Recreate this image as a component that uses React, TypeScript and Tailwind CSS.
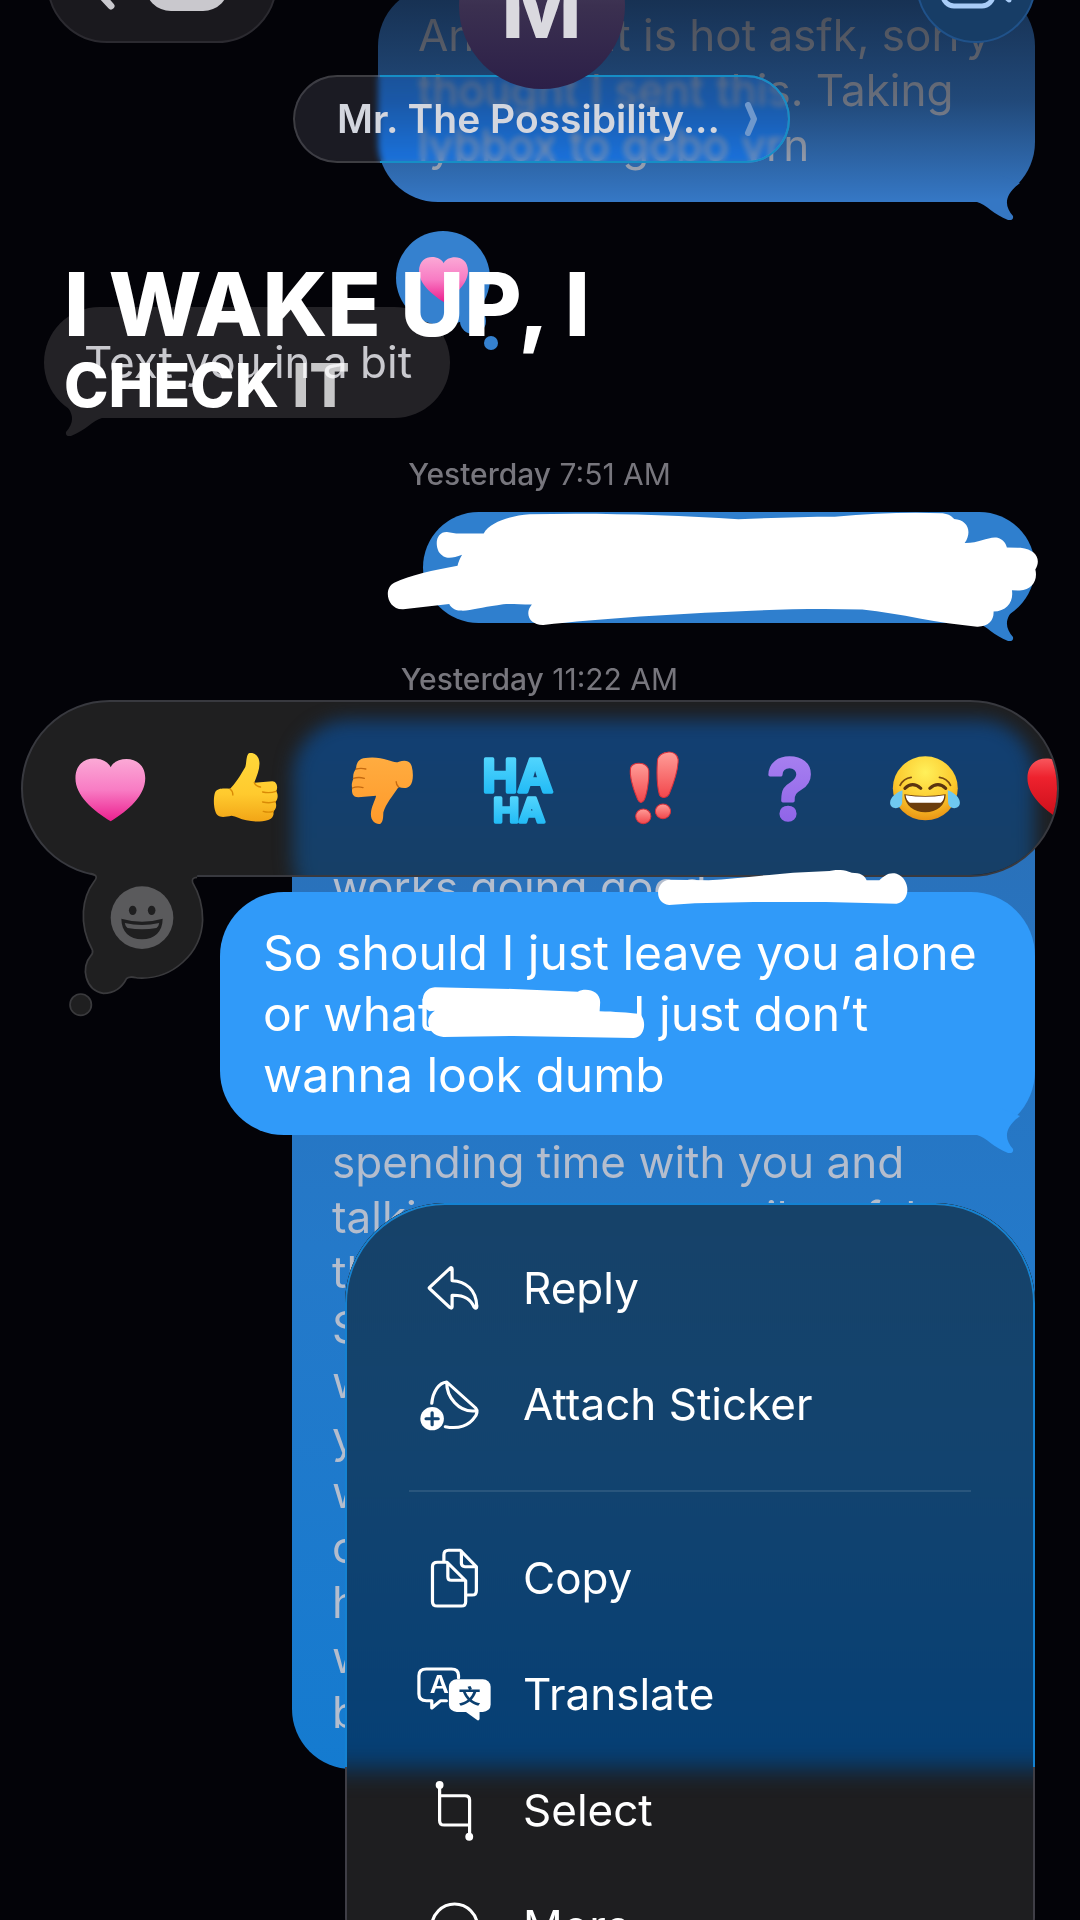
import React from 'react';

type Reaction = {
  label: string;
  viewBox: string;
  art: React.ReactNode;
};

type MenuItem = {
  label: string;
  viewBox: string;
  icon: React.ReactNode;
};

const HeartShape = ({ fill }: { fill: string }) => (
  <path
    d="M321 235 C308 200 219 190 219 268 C219 320 270 365 321 397 C372 365 421 320 421 268 C421 195 335 200 321 235 Z"
    fill={fill}
  />
);

const REACTIONS: Reaction[] = [
  {
    label: 'Heart',
    viewBox: '209 186 220 228',
    art: <HeartShape fill="url(#pink)" />,
  },
  {
    label: 'Thumbs up',
    viewBox: '604 180 220 228',
    art: (
      <>
        <path
          d="M722 187 C735 183 752 192 753 215 C754 235 745 255 738 275 L790 271 C803 271 808 290 801 301 C808 310 807 326 799 332 C804 342 801 357 793 361 C796 372 790 384 778 387 C758 393 735 393 715 388 C697 384 685 376 672 374 C655 378 640 380 632 373 C620 362 618 320 625 303 C632 290 650 292 668 293 C682 280 700 250 712 228 C716 215 714 195 722 187 Z"
          fill="url(#yellow)"
        />
        <path
          d="M738 275 Q742 285 756 288 M762 303 Q782 308 801 301 M762 333 Q782 338 799 332 M764 361 Q780 366 793 361 M668 294 Q676 300 676 312"
          fill="none"
          stroke="#d98a06"
          strokeWidth="4"
          strokeLinecap="round"
        />
      </>
    ),
  },
  {
    label: 'Thumbs down',
    viewBox: '999 186 220 228',
    art: (
      <>
        <path
          d="M1055 208 C1085 203 1105 207 1125 213 C1140 218 1150 222 1158 218 C1175 212 1190 214 1195 232 C1201 255 1199 280 1190 290 C1182 300 1168 297 1157 294 C1140 320 1120 345 1113 370 C1112 385 1113 400 1103 405 C1090 407 1075 395 1077 372 C1078 352 1088 338 1092 320 L1040 325 C1025 325 1020 312 1023 298 C1020 288 1022 280 1026 270 C1024 258 1028 246 1034 240 C1034 222 1042 211 1055 208Z"
          fill="url(#orange)"
        />
        <path
          d="M1034 240 Q1048 236 1062 240 M1026 268 Q1042 263 1058 268 M1023 297 Q1038 291 1054 296 M1157 294 Q1150 286 1150 278"
          fill="none"
          stroke="#c56a10"
          strokeWidth="4"
          strokeLinecap="round"
        />
      </>
    ),
  },
  {
    label: 'Haha',
    viewBox: '1391 186 220 228',
    art: (
      <g
        fill="url(#cyan)"
        stroke="url(#cyan)"
        strokeWidth="10"
        strokeLinejoin="round"
        textAnchor="middle"
        className="font-['Inter',sans-serif] font-bold"
      >
        <text x="1500" y="308" fontSize="136">HA</text>
        <text x="1504" y="400" fontSize="100">HA</text>
      </g>
    ),
  },
  {
    label: 'Exclamation',
    viewBox: '218 186 220 228',
    art: (
      <g fill="url(#coral)" stroke="#d8323c" strokeWidth="3">
        <path d="M260 238 C262 218 308 215 313 245 C315 280 305 320 300 332 C294 343 286 343 281 332 C272 310 256 265 260 238Z" />
        <path d="M338 215 C340 185 395 178 398 212 C398 250 380 295 372 315 C366 327 350 330 344 318 C336 290 336 245 338 215Z" />
        <circle cx="297" cy="382" r="22" />
        <circle cx="354" cy="367" r="22" />
      </g>
    ),
  },
  {
    label: 'Question',
    viewBox: '613 186 220 228',
    art: (
      <text
        x="723"
        y="390"
        fontSize="248"
        textAnchor="middle"
        fill="url(#violet)"
        stroke="url(#violet)"
        strokeWidth="10"
        strokeLinejoin="round"
        className="font-['Inter',sans-serif] font-semibold"
      >
        ?
      </text>
    ),
  },
  {
    label: 'Tears of joy',
    viewBox: '1007 186 220 228',
    art: (
      <>
        <ellipse cx="1115" cy="298" rx="94" ry="96" fill="url(#face)" />
        <path
          d="M1042 289 Q1052 268 1074 265 M1188 289 Q1178 268 1156 265"
          fill="none"
          stroke="#7a4a10"
          strokeWidth="5"
          strokeLinecap="round"
        />
        <path
          d="M1056 298 Q1078 276 1102 298 M1128 298 Q1152 276 1174 298"
          fill="none"
          stroke="#5a3410"
          strokeWidth="9"
          strokeLinecap="round"
        />
        <path d="M1054 316 Q1115 326 1174 316 C1174 350 1148 370 1115 370 C1082 370 1056 350 1054 316Z" fill="#6b3d0c" />
        <path d="M1058 319 Q1115 328 1170 319 C1170 330 1165 338 1160 341 L1070 341 C1063 336 1059 328 1058 319Z" fill="#fff" />
        <path d="M1049 304 C1030 312 1013 325 1013 342 C1014 363 1046 363 1048 340 Z" fill="#6fc8f0" />
        <path d="M1180 304 C1199 312 1215 325 1215 342 C1214 363 1182 363 1181 340 Z" fill="#6fc8f0" />
      </>
    ),
  },
  {
    label: 'Red heart',
    viewBox: '209 186 220 228',
    art: <HeartShape fill="url(#red)" />,
  },
];

const MENU_TOP: MenuItem[] = [
  {
    label: 'Reply',
    viewBox: '378 228 213 192',
    icon: (
      <path d="M476 265 L419 322 Q417 324 419 326 L476 383 C480 386 482 384 482 380 L482 346 C520 345 535 360 544 382 C547 387 552 385 551 378 C550 330 520 303 482 302 L482 268 C482 263 480 261 476 265Z" />
    ),
  },
  {
    label: 'Attach Sticker',
    viewBox: '378 576 213 192',
    icon: (
      <>
        <path d="M425 670 C428 635 445 608 467 606 L548 684 C555 692 551 705 545 712 C530 737 500 748 463 740 M467 606 C466 650 500 700 550 692" />
        <ellipse cx="426" cy="716" rx="33" ry="35" fill="currentColor" stroke="none" />
        <path d="M409 716 H443 M426 698 V734" stroke="#12426f" />
      </>
    ),
  },
];

const MENU_BOTTOM: MenuItem[] = [
  {
    label: 'Copy',
    viewBox: '378 138 213 192',
    icon: (
      <path d="M441 187 H468 L520 242 V305 Q520 318 508 318 H441 Q427 318 427 305 V200 Q427 187 441 187Z M470 190 V230 Q470 241 480 241 H518 M459 182 V165 Q459 151 472 151 H505 L550 200 V272 Q550 285 538 285 H526 M508 153 V190 Q508 200 518 200 H548" />
    ),
  },
  {
    label: 'Translate',
    viewBox: '378 489 213 192',
    icon: (
      <>
        <path d="M466 605 H450 L425 627 V605 H410 Q389 605 389 585 V530 Q389 510 410 510 H480 Q500 510 500 530 V536" />
        <rect x="473" y="541" width="117" height="98" rx="22" fill="currentColor" stroke="none" />
        <path d="M518 637 L553 664 Q559 666 559 658 V636Z" fill="currentColor" stroke="none" />
        <g stroke="none" textAnchor="middle">
          <text x="446" y="583" fontSize="74" fill="currentColor" className="font-['Inter',sans-serif] font-semibold">A</text>
          <text x="531" y="614" fontSize="62" fill="#0a3f70" className="font-['Noto_Sans_CJK_SC',sans-serif] font-bold">文</text>
        </g>
      </>
    ),
  },
  {
    label: 'Select',
    viewBox: '378 837 213 192',
    icon: (
      <>
        <path d="M447 857 V965 Q447 978 460 978 H528 M449 890 H518 Q531 890 531 903 V1010" />
        <ellipse cx="447" cy="858" rx="11" ry="12" fill="currentColor" stroke="none" />
        <ellipse cx="530" cy="1013" rx="11" ry="12" fill="currentColor" stroke="none" />
      </>
    ),
  },
  {
    label: 'More...',
    viewBox: '378 1185 213 192',
    icon: (
      <>
        <ellipse cx="489" cy="1284" rx="64" ry="69" />
        <path d="M460 1284 H461 M489 1284 H490 M518 1284 H519" strokeWidth="14" />
      </>
    ),
  },
];

// shared gradients for the reaction artwork
const Gradients = () => (
  <svg className="absolute size-0" aria-hidden="true">
    <defs>
      <linearGradient id="pink" x1="0" y1="0" x2="0" y2="1">
        <stop offset="0" stopColor="#fba9d6" />
        <stop offset="0.5" stopColor="#f87cc4" />
        <stop offset="1" stopColor="#ec1f8e" />
      </linearGradient>
      <linearGradient id="red" x1="0" y1="0" x2="0" y2="1">
        <stop offset="0" stopColor="#f8565c" />
        <stop offset="0.3" stopColor="#ee222e" />
        <stop offset="1" stopColor="#c80d18" />
      </linearGradient>
      <linearGradient id="yellow" x1="0" y1="0" x2="0" y2="1">
        <stop offset="0" stopColor="#ffd83a" />
        <stop offset="0.6" stopColor="#ffca2e" />
        <stop offset="1" stopColor="#f2a516" />
      </linearGradient>
      <linearGradient id="orange" x1="0" y1="0" x2="0" y2="1">
        <stop offset="0" stopColor="#ffac40" />
        <stop offset="1" stopColor="#ff9a2a" />
      </linearGradient>
      <linearGradient id="cyan" x1="0" y1="0" x2="0" y2="1">
        <stop offset="0" stopColor="#5fdcff" />
        <stop offset="1" stopColor="#16b4f4" />
      </linearGradient>
      <linearGradient id="coral" x1="0" y1="0" x2="0" y2="1">
        <stop offset="0" stopColor="#ff9d98" />
        <stop offset="1" stopColor="#f2474c" />
      </linearGradient>
      <linearGradient id="violet" x1="0" y1="0" x2="0" y2="1">
        <stop offset="0" stopColor="#ad86f2" />
        <stop offset="1" stopColor="#8a5ee6" />
      </linearGradient>
      <radialGradient id="face" cx="0.5" cy="0.25" r="0.8">
        <stop offset="0" stopColor="#fff05a" />
        <stop offset="0.6" stopColor="#fcc82c" />
        <stop offset="1" stopColor="#e58a10" />
      </radialGradient>
    </defs>
  </svg>
);

const Tail = ({ className }: { className: string }) => (
  <svg viewBox="0 0 50 45" className={`absolute -bottom-[18px] h-[45px] w-[50px] ${className}`} aria-hidden="true">
    <path
      d="M0 27 H7 C16 29 24 40 38 45 Q44 46 43 41 C34 31 34 20 50 8 L30 0 L0 0 Z"
      fill="currentColor"
    />
  </svg>
);

const Timestamp = ({ day, time }: { day: string; time: string }) => (
  <p className="mt-9 text-center text-[30px] leading-10 text-[#77767d]">
    <span className="font-medium">{day}</span> {time}
  </p>
);

const MenuRow = ({ item }: { item: MenuItem }) => (
  <button type="button" className="relative flex h-[116px] w-full items-center gap-[26px] px-16 text-left">
    <span className="flex w-[88px] justify-center">
      <svg
        viewBox={item.viewBox}
        preserveAspectRatio="none"
        className="h-16 w-[76px] overflow-visible"
        fill="none"
        stroke="currentColor"
        strokeWidth="9"
        strokeLinecap="round"
        strokeLinejoin="round"
        aria-hidden="true"
      >
        {item.icon}
      </svg>
    </span>
    {item.label}
  </button>
);

const Header = () => (
  <header className="absolute inset-x-0 -top-[77px] grid grid-cols-[1fr_auto_1fr] items-start pr-11 pl-[47px]">
    <button
      type="button"
      aria-label="Back"
      className="flex h-[120px] w-[230px] items-center gap-7 rounded-full border-2 border-[#2b2a30] bg-[#1a191e] pl-9 text-[#c9c8cd]"
    >
      <svg viewBox="0 0 32 54" className="h-[54px] w-8" fill="none" stroke="currentColor" strokeWidth="7" strokeLinecap="round" aria-hidden="true">
        <path d="M26 4 L5 27 L26 50" />
      </svg>
      <span className="h-14 w-[84px] rounded-[26px] bg-[#c9c8cd]" />
    </button>
    <div className="flex flex-col items-center">
      <div className="relative z-10 flex size-[166px] items-center justify-center rounded-full bg-linear-to-b from-[#57506c] via-[#3b3050] to-[#2c1f48] text-[88px] font-bold text-[#dad9df]">
        M
      </div>
      <button
        type="button"
        className="relative -mt-[14px] flex h-[88px] w-[497px] items-center justify-center gap-6 rounded-full border-2 border-white/15 bg-white/10 pl-3 text-[39px] font-semibold text-[#d3d6de] backdrop-blur-[3px] backdrop-brightness-90 backdrop-saturate-200"
      >
        <span className="absolute -inset-0.5 rounded-full border-2 border-[#168ec6] [clip-path:inset(0_0_0_87px)]" />
        Mr. The Possibility...
        <svg viewBox="0 0 14 34" className="h-[34px] w-3.5" fill="none" stroke="#6f98cc" strokeWidth="6" strokeLinecap="round" strokeLinejoin="round" aria-hidden="true">
          <path d="M4 3 L10 17 L4 31" />
        </svg>
      </button>
    </div>
    <button
      type="button"
      aria-label="Video call"
      className="flex size-[120px] items-center justify-center justify-self-end rounded-full border-2 border-[#20528a] bg-[#173d66] pt-1.5"
    >
      <svg viewBox="0 0 72 46" className="h-[46px] w-[72px]" fill="none" stroke="#a9cdf8" strokeWidth="5" strokeLinejoin="round" aria-hidden="true">
        <rect x="3" y="3" width="50" height="40" rx="11" />
        <path d="M59 18 L69 9 V37 L59 28Z" fill="#a9cdf8" />
      </svg>
    </button>
  </header>
);

const Conversation = () => (
  <main className="flex flex-col pr-[45px] pl-11">
    <div className="relative -mt-[14px] w-[657px] self-end rounded-[60px] bg-[#3577c4] px-10 pt-[22px] pb-[29px] text-[44px] leading-[55px] whitespace-nowrap text-[#acb6c8]">
      And that it is hot asfk, sorry<br />
      thought I sent this. Taking<br />
      lybbox to gobo vrn
      <Tail className="right-[15px] text-[#3577c4]" />
    </div>

    <div className="relative mt-[105px] w-[406px] self-start rounded-[56px] bg-[#232226] px-10 py-7 text-[44px] leading-[55px] whitespace-nowrap text-[#c9c9ce]">
      Text you in a bit
      <Tail className="left-[15px] -scale-x-100 text-[#232226]" />
      <svg viewBox="0 0 104 120" className="absolute -top-[76px] -right-[49px] h-[120px] w-[104px]" aria-hidden="true">
        <g fill="#3581cf">
          <ellipse cx="48" cy="47" rx="47" ry="47" />
          <circle cx="78" cy="90" r="13" />
          <circle cx="96" cy="112" r="7" />
        </g>
        <svg x="24" y="25" width="49" height="46" viewBox="219 205 202 192" preserveAspectRatio="none">
          <HeartShape fill="url(#pink)" />
        </svg>
      </svg>
    </div>

    <Timestamp day="Yesterday" time="7:51 AM" />

    <div className="relative mt-[18px] h-[111px] w-[612px] self-end rounded-[56px] bg-[#2f7fce]">
      <Tail className="right-[15px] text-[#2f7fce]" />
      <svg viewBox="55 186 1425 344" preserveAspectRatio="none" className="absolute top-0 -left-[38px] h-[115px] w-[654px]" aria-hidden="true">
        <path
          d="M95 477 C60 480 50 415 75 398 C110 375 160 360 213 347 C215 335 218 325 223 314 C200 325 185 330 172 305 C162 275 170 245 190 246 L210 250 L270 250 C285 215 330 197 370 193 C520 188 680 195 825 208 C900 203 970 200 1035 200 C1120 190 1200 185 1270 190 C1285 193 1290 200 1295 207 C1325 210 1335 245 1318 279 C1350 280 1370 258 1390 263 C1402 268 1408 280 1410 292 L1440 293 C1475 298 1485 330 1472 358 C1478 390 1465 420 1438 421 L1421 420 C1425 455 1410 482 1381 484 C1382 510 1370 530 1345 529 C1260 520 1180 490 1095 478 C1000 474 900 478 830 483 C700 490 520 505 400 524 C370 525 358 490 375 463 C340 463 320 458 300 465 C265 470 240 483 220 481 C205 480 198 470 195 461 Z"
          fill="#fff"
        />
      </svg>
    </div>

    <Timestamp day="Yesterday" time="11:22 AM" />

    <div className="mt-[25px] w-[743px] self-end rounded-[60px] bg-linear-to-b from-[#2b6fb6] via-[#2479c9] to-[#147bd0] px-10 pt-[136px] pb-[29px] text-[44px] leading-[55px] whitespace-nowrap text-[#b4bdcd]">
      works going good<br />
      <br />
      <br />
      <br />
      <br />
      spending time with you and<br />
      talking to you, your vibes felt<br />
      th<br />
      S<br />
      w<br />
      y<br />
      w<br />
      o<br />
      h<br />
      w<br />
      b
    </div>
  </main>
);

const ReactionBar = () => (
  <div className="relative mx-[21px]">
    <div className="relative flex h-[177px] items-center overflow-hidden rounded-full border-2 border-[#38393f] bg-[#1f1f20] pl-[19px]">
      <div className="absolute top-[18px] -bottom-10 left-[270px] right-[22px] rounded-[56px] bg-linear-to-b from-[#113f73] to-[#173f63] blur-[9px]" />
      {REACTIONS.map((reaction) => (
        <button key={reaction.label} type="button" aria-label={reaction.label} className="relative flex w-34 shrink-0 justify-center">
          <svg viewBox={reaction.viewBox} preserveAspectRatio="none" className="size-[76px] overflow-visible">
            {reaction.art}
          </svg>
        </button>
      ))}
    </div>
    <button type="button" aria-label="More reactions" className="absolute top-[172px] left-12">
      <svg viewBox="200 546 392 435" preserveAspectRatio="none" className="h-[145px] w-[135px]">
        <path
          d="M262 546 C282 555 283 562 272 576 C240 620 225 700 268 780 C270 787 269 792 262 799 C235 830 245 900 300 910 C335 910 355 890 367 866 C375 858 385 861 400 864 C500 870 585 790 588 690 C588 640 575 605 559 578 C556 568 560 562 572 562 L572 546 Z"
          fill="#1f1f20"
        />
        <path
          d="M262 550 C282 555 283 562 272 576 C240 620 225 700 268 780 C270 787 269 792 262 799 C235 830 245 900 300 910 C335 910 355 890 367 866 C375 858 385 861 400 864 C500 870 585 790 588 690 C588 640 575 605 559 578 C556 568 560 562 572 562"
          fill="none"
          stroke="#3a3a3d"
          strokeWidth="5"
        />
        <ellipse cx="234" cy="944" rx="31" ry="32" fill="#1f1f20" stroke="#3a3a3d" strokeWidth="5" />
        <ellipse cx="412" cy="683" rx="91" ry="94" fill="#5a5a5c" />
        <ellipse cx="385" cy="661" rx="11" ry="14" fill="#1f1f20" />
        <ellipse cx="440" cy="661" rx="11" ry="14" fill="#1f1f20" />
        <path d="M352 686 Q412 704 472 686 C472 725 448 748 412 748 C376 748 352 725 352 686Z" fill="#1f1f20" />
        <path d="M362 699 Q412 711 462 699 Q461 709 454 714 Q412 722 370 714 Q363 708 362 699Z" fill="#5a5a5c" />
      </svg>
    </button>
  </div>
);

const FocusedMessage = () => (
  <div className="relative mt-[15px] mr-[45px] w-[815px] self-end rounded-[64px] bg-[#309af9] px-[43px] py-[30px] text-[48px] leading-[61px] whitespace-nowrap text-white">
    So should I just leave you alone<br />
    or what
    <span className="relative inline-block h-8 w-[199px]">
      <svg viewBox="397 384 398 154" preserveAspectRatio="none" className="absolute -top-3 -left-3 h-[51px] w-[223px]" aria-hidden="true">
        <path
          d="M420 385 L560 390 L675 398 C690 385 715 395 715 430 L714 457 C740 458 765 461 785 465 C798 480 797 535 775 538 L560 532 L435 535 C405 530 400 475 420 456 L410 457 C392 440 395 388 420 385 Z"
          fill="#fff"
        />
      </svg>
    </span>
    I just don’t<br />
    wanna look dumb
    <Tail className="right-[15px] text-[#309af9]" />
    <svg viewBox="340 542 728 103" preserveAspectRatio="none" className="absolute -top-[22px] left-[437px] h-[35px] w-[251px]" aria-hidden="true">
      <path
        d="M375 571 C335 575 330 640 375 645 L450 640 L620 636 L830 636 L1035 641 C1075 635 1078 570 1035 553 C1010 548 1000 560 985 572 L948 572 C942 558 930 550 905 550 C880 540 860 540 840 545 L735 550 C640 558 560 568 490 572 Z"
        fill="#fff"
      />
    </svg>
  </div>
);

const ContextMenu = () => (
  <div className="relative mt-[68px] mr-[45px] w-[690px] self-end overflow-hidden rounded-[100px] bg-[#1e1e20] pt-[27px] pb-8 text-[44px] text-white">
    {/* the message behind shows through as a soft blue field */}
    <div className="absolute -inset-x-10 -top-10 h-[606px] bg-linear-to-b from-[#174268] via-[#12436f] to-[#053f75] blur-[12px]" />
    {/* rim is tinted blue while it sits over the message */}
    <div className="pointer-events-none absolute inset-0 rounded-[100px] border-2 border-[#3f3e46]" />
    <div className="pointer-events-none absolute inset-0 rounded-[100px] border-2 border-[#1482d2] [clip-path:polygon(0_0,100%_0,100%_564px,0_564px)]" />
    {MENU_TOP.map((item) => (
      <MenuRow key={item.label} item={item} />
    ))}
    <hr className="relative mx-16 my-7 border-t-2 border-white/10" />
    {MENU_BOTTOM.map((item) => (
      <MenuRow key={item.label} item={item} />
    ))}
  </div>
);

export default function App() {
  return (
    <div className="relative h-screen w-full overflow-hidden bg-[#030308] font-['Inter',sans-serif]">
      <Gradients />
      <Conversation />
      <div className="absolute inset-x-0 top-0 h-[200px] bg-linear-to-b from-[#030308]/60 via-[#030308]/40 to-transparent" />
      <Header />

      <section className="absolute inset-x-0 top-[700px] flex flex-col">
        <ReactionBar />
        <FocusedMessage />
        <ContextMenu />
      </section>

      <div className="absolute top-[256px] left-16 font-extrabold text-white">
        <p className="text-[88px] leading-[96px]">I WAKE UP, I</p>
        <p className="text-[60px] leading-[66px]">
          CHECK <span className="text-white/75">IT</span>
        </p>
      </div>
    </div>
  );
}
